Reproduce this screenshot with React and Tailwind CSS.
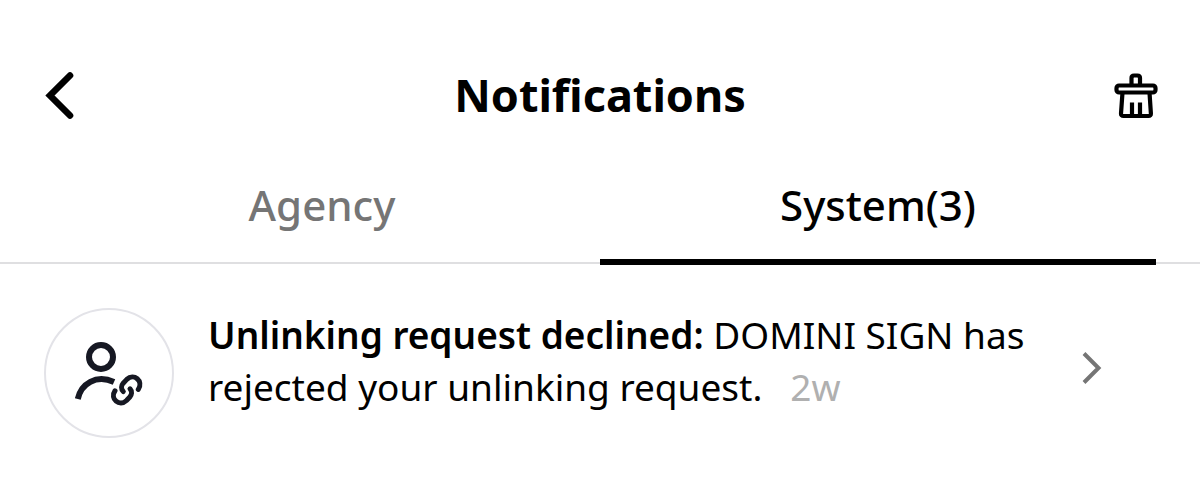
import { useState } from 'react'

const TABS = [
  { id: 'agency', label: 'Agency' },
  { id: 'system', label: 'System(3)' },
]

const NOTIFICATIONS = [
  {
    id: 1,
    title: 'Unlinking request declined:',
    body: 'DOMINI SIGN has rejected your unlinking request.',
    time: '2w',
  },
]

function BackIcon() {
  return (
    <svg width="32" height="52" viewBox="0 0 32 52" fill="none" stroke="currentColor" strokeWidth="6.6" aria-hidden="true">
      <path d="M28 5.500 L8 25.500 L28 45.500" strokeLinejoin="miter" strokeLinecap="round" />
    </svg>
  )
}

function BroomIcon() {
  return (
    <svg width="44" height="46" viewBox="0 0 44 46" fill="none" stroke="currentColor" strokeWidth="4.2" strokeLinejoin="round" strokeLinecap="butt" aria-hidden="true">
      <path d="M17.500 12 V5 Q17.500 2.500 20 2.500 H23.500 Q26 2.500 26 5 V12" />
      <rect x="2.500" y="12.500" width="39" height="7" rx="2.500" />
      <path d="M8.500 19.500 L7 40.500 Q6.900 43 9.500 43 H34.500 Q37 43 36.900 40.500 L35.500 19.500" />
      <path d="M18 29.500 V43 M26 29.500 V43" />
    </svg>
  )
}

function UserLinkIcon() {
  return (
    <svg width="72" height="72" viewBox="0 0 72 72" fill="none" stroke="currentColor" strokeWidth="6" aria-hidden="true">
      <circle cx="28" cy="20" r="12" />
      <path d="M4.800 62 C8 47 23 37 41 45" />
      <g strokeWidth="5" strokeLinecap="round">
        <path d="M50.300 54.500 C47.800 52 48.200 48.500 50.200 46.200 L53.800 42.400 C60.800 35.700 70.800 44 65.300 52.300" />
        <path d="M57 51.800 C59.300 54.300 58.800 57.700 56.800 60 L53.500 63.500 C46.500 70.200 36.500 61.700 42 53.800" />
      </g>
    </svg>
  )
}

function ChevronIcon() {
  return (
    <svg width="20" height="34" viewBox="0 0 20 34" fill="none" stroke="currentColor" strokeWidth="4" aria-hidden="true">
      <path d="M2 2.500 L16.500 17 L2 31.500" />
    </svg>
  )
}

export default function App() {
  const [active, setActive] = useState('system')

  return (
    <main className="min-h-screen bg-white pt-16 font-['Noto_Sans','Liberation_Sans',sans-serif] text-black">
      {/* Header */}
      <header className="flex h-16 items-center justify-between px-[42px]">
        <button type="button" aria-label="Back" className="w-11"><BackIcon /></button>
        <h1 className="pb-0.5 text-[45px] leading-[60px] font-bold">Notifications</h1>
        <button type="button" aria-label="Clear notifications" className="w-11"><BroomIcon /></button>
      </header>

      {/* Tabs */}
      <div role="tablist" className="flex border-b-2 border-[#dfdfe1] px-11">
        {TABS.map(tab => (
          <button
            key={tab.id}
            type="button"
            role="tab"
            aria-selected={active === tab.id}
            onClick={() => setActive(tab.id)}
            className={`-mb-[3px] flex-1 border-b-6 pt-[47px] pb-6 text-[42px] leading-[60px] font-medium ${
              active === tab.id ? 'border-black text-black' : 'border-transparent text-[#757575]'
            }`}
          >
            {tab.label}
          </button>
        ))}
      </div>

      {/* List */}
      <ul>
        {NOTIFICATIONS.map(n => (
          <li key={n.id}>
            <a href="#notification" className="flex items-center gap-[34px] pt-11 pr-[98px] pl-11">
              <span className="flex size-[130px] shrink-0 items-center justify-center rounded-full border-2 border-[#e3e3e8] text-[#161823]">
                <UserLinkIcon />
              </span>
              <p className="flex-1 pb-6 text-[37px] leading-[52px]">
                <b className="font-semibold">{n.title}</b> {n.body}
                <time className="ml-7 text-[#b0b0b0]">{n.time}</time>
              </p>
              <span className="shrink-0 pb-2.5 text-[#757575]"><ChevronIcon /></span>
            </a>
          </li>
        ))}
      </ul>
    </main>
  )
}
